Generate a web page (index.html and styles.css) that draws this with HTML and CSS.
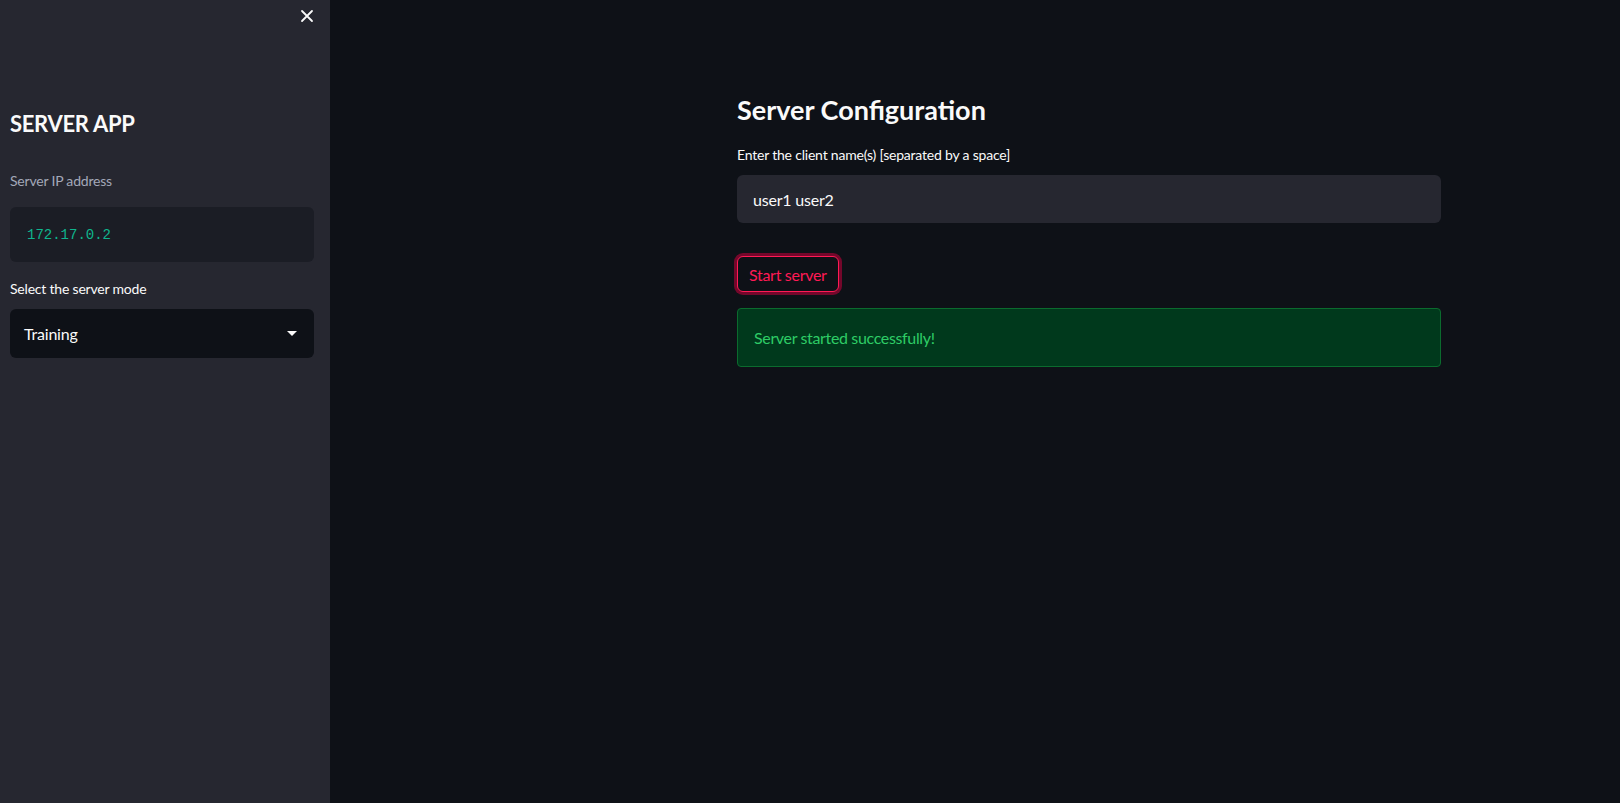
FILE: index.html
```html
<!DOCTYPE html>
<html>
<head>
<meta charset="utf-8">
<link rel="stylesheet" href="styles.css">
</head>
<body>
<div class="app">
  <aside class="sidebar">
    <div class="sidebar-head">
      <button class="close-btn" aria-label="Close sidebar">
        <svg width="14" height="14" viewBox="0 0 14 14"><path d="M2 2 L12 12 M12 2 L2 12" stroke="#fafafa" stroke-width="1.8" stroke-linecap="round"/></svg>
      </button>
    </div>
    <div class="sidebar-body">
      <h2 class="side-title">SERVER APP</h2>
      <div class="field">
        <div class="label muted">Server IP address</div>
        <div class="code-box"><code>172.17.0.2</code></div>
      </div>
      <div class="field">
        <div class="label">Select the server mode</div>
        <div class="select">
          <span>Training</span>
          <svg width="10" height="6" viewBox="0 0 10 6"><path d="M0 0 H10 L5 5 Z" fill="#fafafa"/></svg>
        </div>
      </div>
    </div>
  </aside>
  <main class="main">
    <div class="block">
      <h3 class="title">Server Configuration</h3>
      <div class="field">
        <div class="label">Enter the client name(s) [separated by a space]</div>
        <div class="text-input">user1 user2</div>
      </div>
      <button class="btn">Start server</button>
      <div class="alert">Server started successfully!</div>
    </div>
  </main>
</div>
</body>
</html>
```

FILE: styles.css
```css
* { box-sizing: border-box; }
html, body { margin: 0; padding: 0; height: 100%; }
body {
  background: #0e1117;
  color: #fafafa;
  font-family: Lato, "Noto Sans", sans-serif;
  letter-spacing: -0.2px;
}
.app { display: flex; height: 100vh; }
.sidebar {
  width: 330px;
  flex: none;
  background: #262730;
  display: flex;
  flex-direction: column;
}
.sidebar-head {
  display: flex;
  justify-content: flex-end;
  padding: 7px 14px 0 0;
  height: 32px;
}
.close-btn {
  background: none;
  border: none;
  padding: 2px;
  width: 18px;
  height: 18px;
  display: flex;
  align-items: center;
  justify-content: center;
  cursor: pointer;
}
.sidebar-body { padding: 0 16px 0 10px; }
.side-title {
  margin: 76px 0 0 0;
  font-size: 22px;
  font-weight: 700;
  line-height: 32px;
  letter-spacing: -0.3px;
}
.field { display: flex; flex-direction: column; }
.label {
  font-size: 14px;
  line-height: 20px;
  margin-bottom: 8px;
}
.muted { color: #a3a8b8; }
.sidebar .field:nth-child(2) { margin-top: 31px; }
.sidebar .field:nth-child(2) .label { margin-bottom: 16px; }
.code-box {
  background: #1b1d25;
  border-radius: 6px;
  height: 55px;
  display: flex;
  align-items: center;
  padding-left: 17px;
}
.code-box code {
  font-family: "Liberation Mono", "DejaVu Sans Mono", monospace;
  font-size: 14px;
  letter-spacing: 0;
  color: #0fb58d;
}
.sidebar .field:nth-child(3) { margin-top: 17px; }
.sidebar .field:nth-child(3) .label { margin-bottom: 10px; }
.select {
  background: #0e1117;
  border-radius: 6px;
  height: 49px;
  display: flex;
  align-items: center;
  justify-content: space-between;
  padding: 0 17px 0 14px;
  font-size: 16px;
}
.main { flex: 1; }
.block {
  width: 704px;
  margin-left: 407px;
  padding-top: 90px;
  display: flex;
  flex-direction: column;
  align-items: flex-start;
}
.block > * { width: 100%; }
.title {
  margin: 0 0 15px 0;
  font-size: 27px;
  font-weight: 700;
  line-height: 40px;
  letter-spacing: 0;
}
.main .label { margin-bottom: 10px; }
.text-input {
  background: #262730;
  border-radius: 6px;
  height: 48px;
  display: flex;
  align-items: center;
  padding-left: 16px;
  font-size: 16px;
}
.btn {
  width: auto;
  margin-top: 33px;
  background: #0e1117;
  color: #ff1a55;
  border: 1px solid #ff1a55;
  border-radius: 6px;
  box-shadow: 0 0 0 3px rgba(200, 0, 60, 0.55);
  height: 36px;
  padding: 0 11px;
  font-family: inherit;
  font-size: 16px;
  letter-spacing: -0.3px;
}
.alert {
  margin-top: 16px;
  height: 59px;
  background: #00391c;
  border: 1px solid #0b6b2e;
  border-radius: 4px;
  display: flex;
  align-items: center;
  padding-left: 16px;
  color: #2ecc66;
  font-size: 16px;
  letter-spacing: -0.35px;
}
```
